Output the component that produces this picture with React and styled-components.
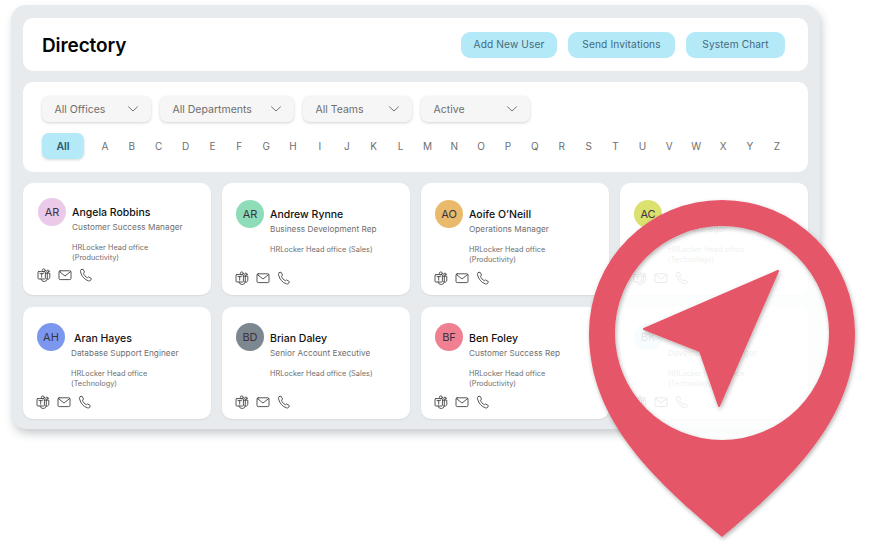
import React from "react";
import styled, { createGlobalStyle } from "styled-components";

const Global = createGlobalStyle`
  html, body { margin: 0; padding: 0; background: #fff; }
  body { font-family: "Inter", "Liberation Sans", sans-serif; }
  #root { width: 881px; height: 560px; overflow: hidden; position: relative; }
`;
const Panel = styled.div`
  box-sizing: border-box; width: 809px; height: 424px; margin: 5px 0 0 11px;
  padding: 13px 12px 10px; background: #e7ebee; border-radius: 15px;
  box-shadow: 2px 5px 9px rgba(70, 80, 90, .28);
  display: flex; flex-direction: column; gap: 11px;
`;
const Header = styled.header`
  height: 53px; background: #fff; border-radius: 10px; display: flex; align-items: center;
  padding: 0 23px 0 19px; gap: 11px;
`;
const Title = styled.h1`
  margin: 1px auto 0 0; font-size: 19px; font-weight: 600; color: #050505; letter-spacing: -.1px;
`;
const ActionButton = styled.button`
  box-sizing: border-box; width: ${p => p.$w}px; height: 26px; padding: 0 0 1px; border: 0; border-radius: 9px;
  background: #b4e9f8; color: #466a79; font: 400 10.2px "Inter", sans-serif; letter-spacing: .1px;
`;
const Filters = styled.section`
  box-sizing: border-box; height: 90px; background: #fff; border-radius: 10px; padding: 14px 15px 0 19px;
`;
const SelectRow = styled.div`display: flex; gap: 9px;`;
const Select = styled.div`
  box-sizing: border-box; width: ${p => p.$w}px; height: 26px; border-radius: 7px; background: #f6f6f6;
  box-shadow: 0 1px 3px rgba(0,0,0,.18); display: flex; align-items: center; justify-content: space-between;
  padding: 0 11px 0 12.500px; font-size: 10.5px; color: #6e6e6e;
`;
const Letters = styled.div`display: flex; align-items: center; margin-top: 11px;`;
const AllButton = styled.div`
  flex: none; width: 42px; height: 26px; border-radius: 7px; background: #b4e9f8; color: #2c5566;
  box-shadow: 0 1px 3px rgba(0,0,0,.16); display: flex; align-items: center; justify-content: center;
  font-size: 10.5px; font-weight: 600; margin-right: 7.5px;
`;
const Letter = styled.span`flex: none; width: 26.88px; text-align: center; font-size: 10px; color: #6e6e6e;`;
const Grid = styled.div`display: grid; grid-template-columns: repeat(4, 188px); grid-auto-rows: 112px; gap: 12px 11px;`;
const Card = styled.article`
  box-sizing: border-box; background: #fff; border-radius: 10px; display: flex; flex-direction: column;
  padding: ${p => p.$top}px 10px ${p => p.$bottom}px ${p => p.$left}px;
  box-shadow: 0 1px 2px rgba(0,0,0,.07);
`;
const Top = styled.div`display: flex; gap: 6px;`;
const Avatar = styled.div`
  flex: none; width: 28px; height: 28px; border-radius: 50%; background: ${p => p.$bg};
  display: flex; align-items: center; justify-content: center; font-size: 11px; color: #3a3340;
`;
const Info = styled.div`padding-top: ${p => p.$pad}px; min-width: 0;`;
const Name = styled.div`font-size: 10.5px; line-height: 16px; min-height: 16px; font-weight: 500; color: #111; margin-left: ${p => p.$shift || 0}px;`;
const Role = styled.div`font-size: 8.2px; line-height: 12px; color: #6e6e6e; letter-spacing: .05px;`;
const Office = styled.div`font-size: 7.3px; line-height: 10px; color: #6e6e6e; margin-top: 9.5px; letter-spacing: .03px;`;
const Icons = styled.div`margin: auto 0 0 -1.5px; display: flex; align-items: center; gap: 7px; color: #444;`;
const Svg = styled.svg`width: 14px; height: 14px; fill: none; stroke: currentColor; stroke-width: .9; stroke-linecap: round; stroke-linejoin: round;`;
const PinOverlay = styled.svg`position: absolute; left: 0; top: 0; width: 881px; height: 560px; pointer-events: none;`;

const Chevron = () => (
  <Svg viewBox="0 0 14 14" style={{ color: "#666" }}><path d="M2.5 4.8 7 9l4.5-4.2" /></Svg>
);
const Teams = () => (
  <Svg viewBox="0 0 14 14">
    <rect x="1" y="3.6" width="7.4" height="7.4" rx=".8" />
    <path d="M3 5.6h3.4M4.7 5.6v3.6" />
    <circle cx="6.8" cy="2.4" r="1.5" />
    <circle cx="10.9" cy="3.3" r="1.2" />
    <path d="M8.4 5.2h4.4v4a2 2 0 0 1-3.2 1.6M4 11a3.2 3.2 0 0 0 6.3-.2V5.2" />
  </Svg>
);
const Mail = () => (
  <Svg viewBox="0 0 14 14">
    <rect x="1" y="2.8" width="12" height="8.8" rx="1.2" />
    <path d="M1.4 3.6 7 8l5.6-4.4" />
  </Svg>
);
const Phone = () => (
  <Svg viewBox="0 0 14 14">
    <path d="M2.3 1.6 4 1.2 5.6 4 4.5 5.2c.5 2 1.9 3.6 4 4.5l1.1-.8 2.7 1.7-.4 1.3c-.3.9-1.3 1.3-2.3 1C5.500 11.700 2.800 8.500 1.500 3.900c-.3-1 .1-2 .8-2.300Z" />
  </Svg>
);

const people = [
  { i: "AR", bg: "#eac9e9", n: "Angela Robbins", r: "Customer Success Manager", o: ["HRLocker Head office", "(Productivity)"], top: 15, bottom: 13, left: 15, pad: 7 },
  { i: "AR", bg: "#8fdcb9", n: "Andrew Rynne", r: "Business Development Rep", o: ["HRLocker Head office (Sales)"], top: 17, bottom: 10, left: 14, pad: 7 },
  { i: "AO", bg: "#e9ba6c", n: "Aoife O’Neill", r: "Operations Manager", o: ["HRLocker Head office", "(Productivity)"], top: 17, bottom: 10, left: 14, pad: 7 },
  { i: "AC", bg: "#dbe16f", n: "", r: "Team Manager", o: ["HRLocker Head office", "(Technology)"], top: 17, bottom: 10, left: 14, pad: 7 },
  { i: "AH", bg: "#7c98ee", n: "Aran Hayes", r: "Database Support Engineer", o: ["HRLocker Head office", "(Technology)"], top: 16, bottom: 10, left: 14, shift: 3, pad: 8 },
  { i: "BD", bg: "#7d878f", n: "Brian Daley", r: "Senior Account Executive", o: ["HRLocker Head office (Sales)"], top: 16, bottom: 10, left: 14, pad: 8 },
  { i: "BF", bg: "#ef8092", n: "Ben Foley", r: "Customer Success Rep", o: ["HRLocker Head office", "(Productivity)"], top: 16, bottom: 10, left: 14, pad: 8 },
  { i: "BK", bg: "#b9e6f6", n: "", r: "Development Manager", o: ["HRLocker Head office", "(Technology)"], top: 16, bottom: 10, left: 14, pad: 8 },
];
const selects = [["All Offices", 109], ["All Departments", 134], ["All Teams", 109], ["Active", 109]];
const actions = [["Add New User", 96], ["Send Invitations", 107], ["System Chart", 99]];

export default function App() {
  return (
    <>
      <Global />
      <Panel>
        <Header>
          <Title>Directory</Title>
          {actions.map(([t, w]) => <ActionButton key={t} $w={w}>{t}</ActionButton>)}
        </Header>
        <Filters>
          <SelectRow>
            {selects.map(([t, w]) => <Select key={t} $w={w}>{t}<Chevron /></Select>)}
          </SelectRow>
          <Letters>
            <AllButton>All</AllButton>
            {"ABCDEFGHIJKLMNOPQRSTUVWXYZ".split("").map(l => <Letter key={l}>{l}</Letter>)}
          </Letters>
        </Filters>
        <Grid>
          {people.map(p => (
            <Card key={p.i + p.r} $top={p.top} $bottom={p.bottom} $left={p.left}>
              <Top>
                <Avatar $bg={p.bg}>{p.i}</Avatar>
                <Info $pad={p.pad}>
                  <Name $shift={p.shift}>{p.n}</Name>
                  <Role>{p.r}</Role>
                  <Office>{p.o.map(l => <div key={l}>{l}</div>)}</Office>
                </Info>
              </Top>
              <Icons><Teams /><Mail /><Phone /></Icons>
            </Card>
          ))}
        </Grid>
      </Panel>
      <PinOverlay viewBox="0 0 881 560">
        <defs>
          <filter id="pinShadow" x="-10%" y="-10%" width="120%" height="120%">
            <feDropShadow dx="1" dy="2" stdDeviation="2" floodColor="#000" floodOpacity=".3" />
          </filter>
        </defs>
        <circle cx="722" cy="333" r="108" fill="#fff" fillOpacity=".88" />
        <g fill="#e65769" filter="url(#pinShadow)">
          <path fillRule="evenodd" d="M722 200A133 133 0 0 1 855 333C855 420 790 480 722 537 654 480 589 420 589 333A133 133 0 0 1 722 200ZM722 226A107 107 0 1 0 722 440 107 107 0 1 0 722 226Z" />
          <path stroke="#e65769" strokeWidth="2" strokeLinejoin="round" d="M778 271 644 329 700 351 719 406Z" />
        </g>
      </PinOverlay>
    </>
  );
}
